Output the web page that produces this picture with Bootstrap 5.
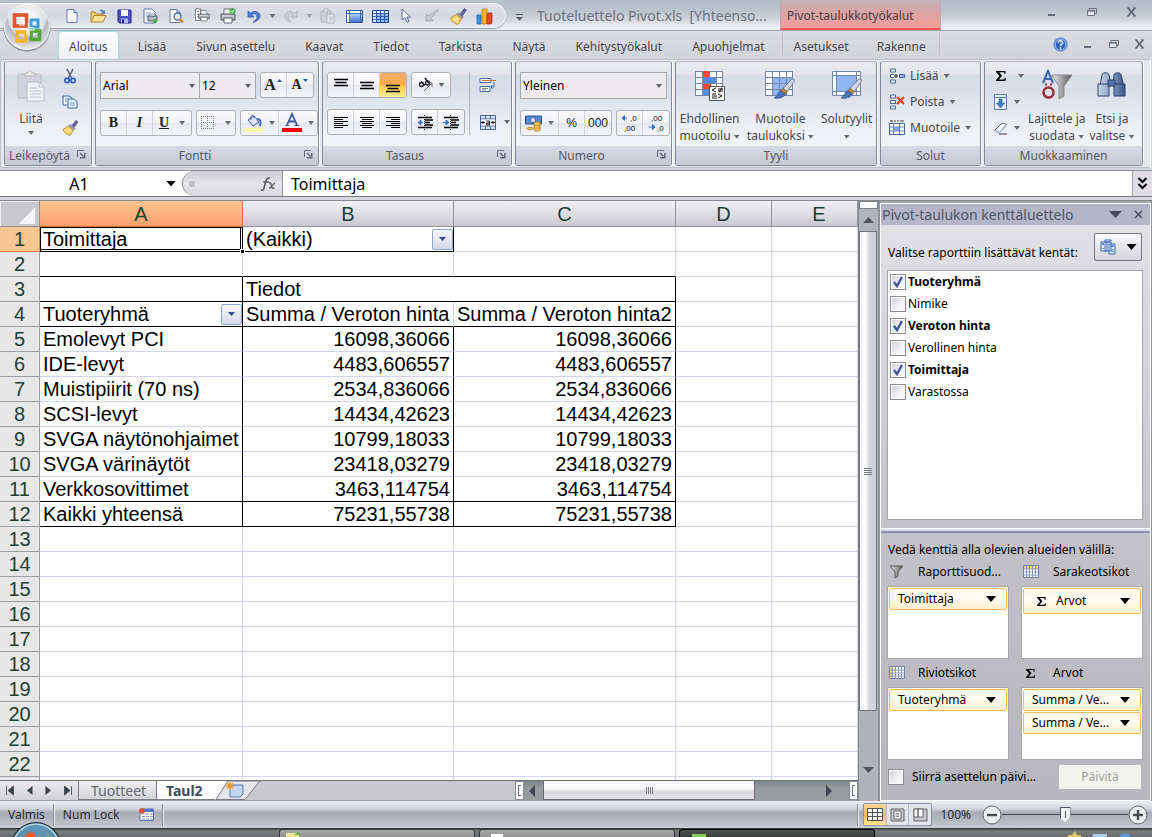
<!DOCTYPE html>
<html lang="fi">
<head>
<meta charset="utf-8">
<meta name="viewport" content="width=device-width, initial-scale=1">
<title>Tuoteluettelo Pivot.xls</title>
<link href="https://cdn.jsdelivr.net/npm/bootstrap@5.3.0/dist/css/bootstrap.min.css" rel="stylesheet">
<script src="https://cdn.jsdelivr.net/npm/bootstrap@5.3.0/dist/js/bootstrap.bundle.min.js"></script>
<style>
:root{--ui:"Noto Sans","Open Sans",sans-serif;--cell:"Liberation Sans",Arial,sans-serif;--ink:#46474f}
body{font-family:var(--ui);font-size:12px;line-height:16px;color:var(--ink);background:#d6d7de}
button,select,input{font:inherit;color:inherit}
button{background:none;border:0;padding:0}
svg{display:block;flex:none;overflow:visible}
/* title bar */
.titlebar{height:31px;background:linear-gradient(#b4bfc9,#b9c3cc 30%,#cdd1d8 60%,#eef0f4 92%);border-bottom:1px solid #a4a9b1}
.quickbar{height:25px;margin:3px 0 0;padding-left:59px;width:506px;background:linear-gradient(#e0e5ec,#d3d8e1 50%,#e6e9ef);border:1px solid #f2f4f7;border-left:0;border-radius:0 14px 14px 0;box-shadow:0 1px 1px #8d95a4}
.quickbar button,.tool26{width:26px;height:24px;display:flex;align-items:center;justify-content:center}
.tool26{height:26px}
.quickbar .thin{width:11px}
.doc-title{width:244px;padding-left:5px;font-size:14px;color:#6b7280;line-height:31px}
.ctx-title{width:161px;height:30px;line-height:31px;padding-left:6px;color:#454249;background:linear-gradient(#c0b4ba,#dba3a6 45%,#ee9e9c 85%);border-bottom:2px solid #f0584e;border-left:1px solid #b9aab4;border-right:1px solid #b9aab4}
.winctl button{width:40px;height:24px;display:flex;align-items:center;justify-content:center}
.orb{position:absolute;left:3px;top:3px;z-index:5}
.tabs{height:28px;padding-left:58px;gap:8px;background:linear-gradient(#dcdde3,#d3d4db)}
.tabs a{display:block;color:var(--ink);text-decoration:none;padding:7px 10px 3px;border:1px solid transparent;border-bottom:0;height:28px;white-space:nowrap}
.tabs a.on{background:linear-gradient(#fdfdff,#f0f2f8);border-color:#a9dcdf;border-radius:4px 4px 0 0;box-shadow:0 0 2px #8fd0d4}
.ctx-tabs{border-left:1px solid #c3c0c8;border-right:1px solid #c3c0c8;height:24px;gap:6px;padding-right:2px;margin-left:-2px}
.docctl{gap:10px;padding-right:6px;margin-top:-2px}
/* ribbon */
.ribbon{height:109px;padding:1px 0 5px 3px;gap:3px;background:#e8e9f0;border:1px solid #bdc0c8;border-right-color:#fff;border-radius:3px;margin:0 1px 0 0}
.rgroup{border:1px solid #85899a;border-top-color:#b8b6be;border-radius:3px;height:105px;background:linear-gradient(#ebeaf1 0,#e4e5ed 12%,#d6dde6 13%,#dbe0ea 30%,#eceef5 60%,#f0f3f6 80%);box-shadow:1px 0 0 #fbfbfd;flex:none}
.rfoot{height:19px;line-height:19px;text-align:center;background:linear-gradient(#d7d9e5,#c6c9d3);color:#565a67;position:relative;margin-top:auto}
.rfoot button{position:absolute;right:5px;top:4px}
.g1{width:88px}.g2{width:224px}.g3{width:190px}.g4{width:157px}.g5{width:202px}.g6{width:101px}.g7{width:159px}
.row-a{padding-top:10px}
.row-b{padding-top:11px}
.colpad{padding-top:1px}
.bset{border:1px solid #aeb1ba;border-radius:3px;height:26px;background:linear-gradient(#fbfbfc,#f2f2f6 48%,#e6e8ef 52%,#f5f6fa);display:flex}
.bset button{flex:1 1 auto;width:26px;height:24px;display:flex;align-items:center;justify-content:center;gap:6px;border-right:1px solid #d2d3da;color:#222}
.bset button:last-child{border-right:0}
.bset .wide{width:38px}
.bset .on{background:linear-gradient(#f5ad6c,#f9a94c 45%,#fdd069 60%,#fdeb93)}
.bset .slim{font-family:"Liberation Sans Narrow",var(--cell);font-size:12px}
.combo{height:27px;border:1px solid #a5abb5;border-radius:0;background:#eeebef url("data:image/svg+xml,%3Csvg xmlns='http://www.w3.org/2000/svg' width='6' height='4'%3E%3Cpath d='M0 0h6L3 4z' fill='%2360636b'/%3E%3C/svg%3E") no-repeat right 4px center;appearance:none;padding:0 2px;color:#000;outline:0}
.sizebox{width:56px;border-left:0}
.rserif{font-family:"Liberation Serif",serif;font-weight:bold;line-height:20px;font-size:14px}
.rserif.lg{font-size:16px}
.rserif.nar{gap:1px}
.big{line-height:17px;text-align:center;white-space:nowrap;display:flex;flex-direction:column;align-items:center;padding-top:8px}
.big svg.ic{margin-bottom:8px}
.ct{display:inline-block;flex:none;width:6px;height:4px;background:#666a73;clip-path:polygon(0 0,100% 0,50% 100%);vertical-align:middle}
.ct.blk{width:10px;height:6px;background:#000}
.rowbtn{display:flex;align-items:center;height:26px;gap:5px;white-space:nowrap}
.vsep{width:1px;background:#b4b6be;margin:0 4px}
.decs{font-family:var(--cell);font-size:8px;fill:#111}
/* formula bar */
.fbar{height:27px;margin-top:2px;border-top:1px solid #8c8f94;border-bottom:1px solid #77797d;background:#fff;color:#000;font-size:16px}
.namebox{width:182px;position:relative}
.namebox input{width:158px;text-align:center;border:0;height:25px;outline:0;background:none}
.fxpart{width:101px;border:1px solid #8c8f94;border-width:0 1px 0 1px;border-radius:13px 0 0 13px;background:linear-gradient(#cdccd2,#e6e5e9 50%,#d8d7dc)}
.fbar .entry{border:0;outline:0;padding:0 8px;min-width:0;height:25px}
.xpand{width:20px;border-left:1px solid #a2a4a8;background:#e0dee4}
.work{border-top:1px solid #85888c;margin-top:3px;min-height:0}
/* sheet */
.sheet{background:#fff;overflow:hidden;min-height:0;position:relative}
.sheet table{table-layout:fixed;border-collapse:separate;border-spacing:0;width:100%;font-family:var(--cell);font-size:20px;line-height:22px;color:#000}
.sheet td,.sheet thead th,.sheet tbody th{padding:0 3px;height:25px;border:0 solid #d3d3ec;border-width:0 1px 1px 0;white-space:nowrap;overflow:hidden}
.sheet thead th{height:26px;font-weight:400;text-align:center;color:#1f3f35;background:linear-gradient(#f2f0f4,#dbdae0 60%,#c9c9cf);border-color:#919399;line-height:24px}
.sheet tbody th{font-weight:400;text-align:center;padding:0;color:#1f3f35;background:#e7e7e8;border-color:#9b9da0}
.sheet thead th.sel{background:linear-gradient(#fdc692,#fd9f6a);border-color:#d97440}
.sheet tbody th.sel{background:#f6c690;border-color:#dd8a50}
.sheet thead th.corner{background:linear-gradient(135deg,transparent 0 50%,#f6f6f8 50%) no-repeat 19px 7px/16px 16px,#c8c7cb;box-shadow:inset 1px 1px #eee}
.sheet thead th:last-child{padding-left:12px}
.sheet .bb{border-bottom-color:#000}.sheet .br{border-right-color:#000}
.sheet .num{text-align:right;padding-right:3px}
.cur{box-shadow:inset 1px 1px #000,inset -1px -1px #fff,inset -2px -2px #000}
.sheet .grip{position:absolute;right:-3px;bottom:-3px;width:5px;height:5px;background:#000;border:1px solid #fff;z-index:2}
.cellbox{display:flex;justify-content:space-between;align-items:center}
.dd{width:21px;height:21px;border:1px solid #90a4cd;border-radius:2px;background:linear-gradient(#f6f7fc,#d6d9e8);display:flex;align-items:center;justify-content:center;margin-right:-3px}
.dd i{width:7px;height:4px;background:#2f4a8f;clip-path:polygon(0 0,100% 0,50% 100%)}
/* sheet tabs and scroll bars */
.sheetbar{height:21px;flex:none;background:#c9c9cd;border-top:1px solid #6e7278;border-bottom:1px solid #9da0a6;font-size:14px;line-height:19px}
.sheetnav{width:78px;background:linear-gradient(#eceaee,#d2d1d6)}
.stab{height:19px;background:linear-gradient(#f0eef1,#d5d4d9);border:1px solid #7a7d84;border-width:0 1px 1px;padding:0 10px 0 12px;width:79px;color:#65697a}
.stab.on{background:#fff;font-weight:bold;color:#434a5a;width:58px;padding:0 0 0 9px;border-width:0 0 1px}
.hsb{width:325px;background:linear-gradient(#7f8487,#979c9f 40%)}
.hthumb{flex:0 0 212px;background:linear-gradient(#f5f4f6,#fcfbfc 40%,#d7d6db 60%,#e5e4e9);border:1px solid #6b6e74;border-top:0}
.splitter{width:9px;flex:none;background:#fff;border:1px solid #8a8d96}
.splitter:before{content:"";display:block;width:3px;height:11px;margin:3px 0 0 2px;border:1px solid #68709a;border-right:0}
.vsb{width:20px;flex:none;background:#b1b2bc;border-left:1px solid #85888f}
.vsplit{height:8px;background:#fff;border:1px solid #7d8088}
.vthumb{background:linear-gradient(90deg,#f4f4f7,#fcfcfe 35%,#d4d5dc 60%,#cfd0d8);border:1px solid #71747d;margin-right:1px;flex:0 1 480px}
.grid-lines{display:flex;flex-direction:column;gap:1px}
.grid-lines i{width:8px;height:1px;background:#7c7e86}
.grid-lines.v{flex-direction:row}.grid-lines.v i{width:1px;height:7px}
/* field list pane */
.fpane{width:274px;flex:none;color:#000;border:1px solid #8f9299;border-width:0 1px 0 2px;padding-top:2px;background:#a5a8ae}
.fbody{border:1px solid #fff;background:linear-gradient(#e4e3e9,#c3c2c8 55%,#b7b6bd);min-height:0}
.fhead{height:21px;background:#b4b5c9;color:#4f5668;font-size:14px;padding:0 7px 0 1px;line-height:20px}
.chooser{width:48px;height:28px;border:1px solid #74777d;border-radius:2px;background:linear-gradient(#f9f9fb,#d3d3da);display:flex;align-items:center;justify-content:center;gap:11px}
.fields{background:#fff;border:1px solid #a3a4a9;margin:9px 7px 0 6px}
.fields label{height:22px;display:flex;align-items:center;gap:2px;padding-left:2px}
.tick{appearance:none;width:16px;height:16px;margin:0;border:1px solid #8b8d91;background:linear-gradient(135deg,#cfd0d5,#f8f8fa 70%);box-shadow:inset 0 0 0 1px #fff}
.tick:checked{background:url("data:image/svg+xml,%3Csvg xmlns='http://www.w3.org/2000/svg' width='14' height='14'%3E%3Cpath d='M3 7l3 4 5-9' fill='none' stroke='%233f56a0' stroke-width='2.4'/%3E%3C/svg%3E") center,linear-gradient(135deg,#cfd0d5,#f8f8fa 70%)}
.divider{height:5px;flex:none;margin-top:8px;border-top:1px solid #fff;border-bottom:2px solid #8c8cb4;background:#dcdce6}
.hint{padding:9px 0 0 7px}
.zones{display:grid;grid-template-columns:1fr 1fr;column-gap:12px;margin:0 7px 0 6px}
.zhead{height:28px;display:flex;align-items:center}
.zhead svg{margin:0 13px 0 2px}
.zbox{height:73px;background:#fff;border:1px solid #a8a9ad;padding:1px}
.pill{width:100%;height:22px;border:1px solid #fbbb62;border-radius:2px;background:linear-gradient(#fff8e9,#fffdf6 40%,#ffefcc);display:flex;align-items:center;padding:0 10px 0 8px;margin-bottom:1px;color:#000}
.pill .ct{margin-left:auto}
.pill.tall{height:26px;padding-left:12px;gap:9px}
.lastrow{margin:4px 8px 10px 7px}
.upd{width:84px;height:26px;border:1px solid #bdbcb8;border-radius:2px;background:#f2f2f1;color:#a09f99}
/* status bar and task bar */
.status{height:27px;flex:none;background:linear-gradient(#eceef4,#d4d6de 28%,#a9adb9 42%,#b4b8c1 70%,#c8cbd0);color:#2a2d35}
.stsep{width:2px;height:22px;border-left:1px solid #8f9199;border-right:1px solid #e9eaee}
.zoompct{padding:0 11px 0 8px}
.views{border:1px solid #8b91a0;border-radius:2px;height:23px;background:#e4e5ea}
.views button{width:22px;height:21px;display:flex;align-items:center;justify-content:center;border-right:1px solid #b9bbc3}
.views .on{width:23px;background:linear-gradient(#fbd3a2,#fbba4c 50%,#fdeb93)}
.zoomer{appearance:none;width:126px;height:20px;margin:0;background:linear-gradient(#45484f,#45484f) no-repeat center/100% 1px}
.zoomer::-webkit-slider-thumb{appearance:none;width:11px;height:16px;clip-path:polygon(0 0,100% 0,100% 65%,50% 100%,0 65%);border:0;background:linear-gradient(#5a5e66,#5a5e66) no-repeat center/1px 7px,#f1f2f5;box-shadow:inset 0 0 0 1px #4f535b}
.taskbar{height:9px;flex:none;background:linear-gradient(#4e5052,#7a7b7c 30%,#6a6b6c);border-top:1px solid #3a3b3d;position:relative;gap:4px;padding-left:279px}
.startorb{position:absolute;left:10px;top:-8px}
.tbtn{flex:0 1 196px;height:12px;border:1px solid #33363a;border-radius:3px;background:linear-gradient(#a9a8a8,#8b8b8b);padding-left:6px}
.tbtn.on{background:linear-gradient(#4d5150,#303433);border-color:#000}
.tray{gap:10px;padding:2px 20px 0 0}
</style>
</head>
<body class="vh-100 overflow-hidden d-flex flex-column position-relative">

<svg width="0" height="0" class="position-absolute" aria-hidden="true">
 <defs>
  <linearGradient id="blu" x2="0" y2="1"><stop stop-color="#b9d4f8"/><stop offset="1" stop-color="#4678d0"/></linearGradient>
  <linearGradient id="stl" x2="1" y2="0"><stop stop-color="#c9d6e6"/><stop offset=".5" stop-color="#7f9cc4"/><stop offset="1" stop-color="#3b5687"/></linearGradient>
  <linearGradient id="gry" x2="1" y2="0"><stop stop-color="#eee"/><stop offset="1" stop-color="#555"/></linearGradient>
  <radialGradient id="orbg" cx=".5" cy=".3" r=".75"><stop stop-color="#fff"/><stop offset=".55" stop-color="#dedfe4"/><stop offset=".6" stop-color="#b5b7bf"/><stop offset="1" stop-color="#f6f6f8"/></radialGradient>
  <symbol id="sheetpg" viewBox="0 0 16 16"><path d="M3 1.500h7l3 3v10H3z" fill="#fff" stroke="#5f78a6"/><path d="M10 1.500v3h3" fill="#cfdcf0" stroke="#5f78a6"/></symbol>
  <symbol id="brush" viewBox="0 0 16 16"><path d="M9.500 5.500l4-5 2 1.500-4 5.500z" fill="#6b5ea8" stroke="#473d80" stroke-width=".6"/><path d="M7.500 4.500l5 4-1.500 1.700L6 6.500z" fill="#9aa0b0" stroke="#555b70" stroke-width=".5"/><path d="M6 6l5 4.200L7.500 15.500C4 14.500 1 12 .5 9.500z" fill="#f6d66a" stroke="#a8762a" stroke-width=".7"/><path d="M3 10l4 3M5 8.500l3.500 3" stroke="#fff3b8" stroke-width="1"/></symbol>
  <symbol id="sigma" viewBox="0 0 12 12"><path d="M1 1h9.500v3H9.500C9.500 2.500 9 2.200 8 2.200H4.200L7 5.700 3.800 9.500h4.400c1.200 0 1.500-.5 1.800-1.700h1L10.400 11H1v-1l3.500-4L1 2z" fill="#000"/></symbol>
  <symbol id="grid" viewBox="0 0 30 26"><rect x=".5" y=".5" width="27" height="24" fill="#fff" stroke="#7585a6"/><path d="M7.500 0v25M14.500 0v25M21.500 0v25M0 6.500h28M0 12.500h28M0 18.500h28" stroke="#7585a6"/></symbol>
  <symbol id="paint" viewBox="0 0 20 20"><path d="M16.500 1c2.500-1.500 3.500 .5 2.500 2.500L12.500 12.500l-4-3z" fill="#d3d6de" stroke="#5d6a88" stroke-width=".8"/><path d="M8.500 9.500l4 3-1.500 2.300-4.500-3.300z" fill="#c98b3b" stroke="#7d4c12" stroke-width=".6"/><path d="M6.500 11.500l4.500 3.300C9 18.500 4 19.500 0 18.500c3-1 3.500-6 6.500-7z" fill="#4a72b5" stroke="#30508c" stroke-width=".6"/></symbol>
  <symbol id="dlg" viewBox="0 0 9 9"><path d="M.5 7V.5H7" fill="none" stroke="#666a78"/><path d="M3 3l3.500 3.500" stroke="#666a78" stroke-width="1.200"/><path d="M8.500 3v5.500H3V7h4V3z" fill="#666a78"/></symbol>
  <symbol id="min" viewBox="0 0 12 10"><path d="M2 8h7" stroke="#596070" stroke-width="1.800"/></symbol>
  <symbol id="res" viewBox="0 0 12 10"><path d="M3 3V1.500h7.500v5H9" fill="none" stroke="#6b7280"/><path d="M1.500 3.500h7v5h-7z" fill="#e3e6ec" stroke="#6b7280"/><path d="M1 3.800h8" stroke="#6b7280" stroke-width="1.600"/></symbol>
  <symbol id="cls" viewBox="0 0 12 10"><path d="M2 1l7 8M9 1L2 9" stroke="#5f6675" stroke-width="1.800"/><path d="M1 1h3M7 1h3M1 9h3M7 9h3" stroke="#5f6675"/></symbol>
  <symbol id="rows3" viewBox="0 0 16 16"><path d="M1.500 1h5v3h-5zM1.500 6.500h5v3h-5zM1.500 12h5v3h-5z" fill="#fff" stroke="#44649c"/></symbol>
  <symbol id="prn" viewBox="0 0 18 18"><path d="M5 7V2h7l1 1v4" fill="#fff" stroke="#667"/><path d="M2 7h14v6H2z" fill="#a9adb8" stroke="#555a66"/><path d="M5 11h8v5H5z" fill="#fff" stroke="#667"/><path d="M3 9h12" stroke="#e8eaf0"/></symbol>
 </defs>
</svg>

<header class="flex-shrink-0">
 <button class="orb" aria-label="Office-painike">
  <svg width="48" height="49" viewBox="0 0 48 49"><circle cx="24" cy="25" r="23.500" fill="#8d9098"/><circle cx="24" cy="24" r="22.500" fill="url(#orbg)" stroke="#fff"/>
   <g fill="none" stroke-width="3.600"><rect x="11.500" y="12" width="12" height="11" stroke="#e0562d"/><rect x="28" y="17" width="7" height="7" stroke="#3d9fe0" stroke-width="3"/><rect x="14" y="29" width="9" height="9" stroke="#f6b526"/><rect x="28" y="28" width="8.500" height="8.500" stroke="#55a839"/></g>
   <path d="M21 17v5h-5M25.500 20v4.500h5M18 26.500h6v5M26 33v-6h6" fill="none" stroke="#fff" stroke-width="1.200"/></svg>
 </button>
 <div class="titlebar d-flex">
  <div class="quickbar d-flex flex-shrink-0">
   <button aria-label="Uusi"><svg width="16" height="16"><use href="#sheetpg"/></svg></button>
   <button aria-label="Avaa"><svg width="17" height="16" viewBox="0 0 17 16"><path d="M1 14V4h4l1 2h7v2" fill="#f5d070" stroke="#b4832a"/><path d="M1 14l3-6.500h12L13 14z" fill="#fde394" stroke="#b4832a"/><path d="M9 3c2-2 4-1.500 5 0l1-1v4h-4l1.500-1C12 3.500 10.500 3 9 3z" fill="#4f84cc"/></svg></button>
   <button aria-label="Tallenna"><svg width="15" height="15" viewBox="0 0 15 15"><path d="M1 1h13v13H2.500L1 12.500z" fill="#4c4fc4" stroke="#25278a"/><path d="M4 1h7v6H4z" fill="#f4f6ff"/><path d="M4 9.500h7V14H4z" fill="#a9b4e8"/><path d="M5 10.500h2V14H5z" fill="#25278a"/></svg></button>
   <button aria-label="Pikatulostus"><svg width="16" height="16" viewBox="0 0 16 16"><path d="M2 1h8l3 3v11H2z" fill="#fff" stroke="#5f78a6"/><path d="M4 5h5M4 7h4M4 9h3" stroke="#7fa0d4"/><path d="M6 8h9v5H6z" fill="#b3bac8" stroke="#515a70"/><path d="M8 6h5v2H8z" fill="#fff" stroke="#515a70" stroke-width=".6"/><circle cx="13" cy="13" r="2.200" fill="#45b04a"/></svg></button>
   <button aria-label="Esikatselu"><svg width="16" height="16" viewBox="0 0 16 16"><use href="#sheetpg" width="16" height="16" x="-1"/><circle cx="9.500" cy="8.500" r="3.500" fill="#dcecff" stroke="#5b6f94" stroke-width="1.300"/><path d="M12 11l3 3.500" stroke="#d38a25" stroke-width="2.400"/></svg></button>
   <button aria-label="Sivun asetukset"><svg width="17" height="16" viewBox="0 0 18 18"><path d="M1 1h6v13H1z" fill="#fff" stroke="#667"/><path d="M3 4h2M3 7h2M3 10h2" stroke="#445"/><g transform="translate(3 1)scale(.85)"><use href="#prn" width="18" height="18"/></g></svg></button>
   <button aria-label="Tulosta"><svg width="18" height="18" viewBox="0 0 18 18"><use href="#prn" width="18" height="18"/><circle cx="13.500" cy="4" r="3" fill="#4fae4d"/><path d="M12 4l1.200 1.300L15 3" stroke="#fff" fill="none"/></svg></button>
   <button aria-label="Kumoa"><svg width="14" height="15" viewBox="0 0 14 15"><path d="M1 2v6h6L5 6c2-2.500 5.500-1 5 2-.3 2-2 4-4 5.500C10 12.500 13.500 9.500 13 6.500 12.400 2.500 7 1 3.200 4.200z" fill="#4a80d6" stroke="#2d55a5" stroke-width=".7"/></svg></button>
   <button class="thin" aria-label="Kumoa-luettelo"><i class="ct"></i></button>
   <button aria-label="Tee uudelleen"><svg width="14" height="15" viewBox="0 0 14 15"><path d="M13 2v6H7l2-2C7 3.500 3.500 5 4 8c.3 2 1 3.500 3 5C3 12 .5 9.500 1 6.500 1.600 2.500 7 1 10.800 4.200z" fill="#cdd0d9" stroke="#a6abb8" stroke-width=".7"/></svg></button>
   <button class="thin" aria-label="Toista-luettelo"><i class="ct opacity-50"></i></button>
   <button aria-label="Liitä" class="opacity-50"><svg width="16" height="16" viewBox="0 0 16 16"><path d="M1 3h10v11H1z" fill="#c6c6ce" stroke="#888"/><path d="M4 1h4v3H4z" fill="#eee" stroke="#888"/><path d="M7 6h7v9H7z" fill="#fff" stroke="#888"/><path d="M9 9h4M9 11h4M9 13h3" stroke="#999"/></svg></button>
   <button aria-label="Kiinnitä ruudut"><svg width="17" height="13" viewBox="0 0 17 13"><path d="M.5.500h16v12H.5z" fill="#fff" stroke="#2c54a4"/><path d="M4 3.500h12V12H4z" fill="url(#blu)"/><path d="M3.500 .5V12M0 3.500h17M14.500 0v13" stroke="#2c54a4" stroke-width=".8"/></svg></button>
   <button aria-label="Taulukko"><svg width="17" height="13" viewBox="0 0 17 13"><path d="M.5.500h16v12H.5z" fill="#dbe9ff" stroke="#1f4694"/><path d="M4.500 4H16v8H4.500z" fill="#8fb4f0"/><path d="M4.500 0v13M8.500 0v13M12.500 0v13M0 3.500h17M0 6.500h17M0 9.500h17" stroke="#1f4694" stroke-width=".8"/></svg></button>
   <button aria-label="Valitse objektit"><svg width="12" height="16" viewBox="0 0 12 16"><path d="M2 1v11l2.700-2.500L7 14.500l2-1L7 9h3.600z" fill="#fff" stroke="#5a6c92"/></svg></button>
   <button aria-label="Nuoli"><svg width="14" height="14" viewBox="0 0 14 14"><path d="M12.500.500l1 1L6 9l2 3H1V5l3 2z" fill="#c7cad3" stroke="#9ba0ad" stroke-width=".8"/></svg></button>
   <button aria-label="Muotoilusivellin"><svg width="17" height="17"><use href="#brush"/></svg></button>
   <button aria-label="Kaavio"><svg width="17" height="17" viewBox="0 0 17 17"><path d="M1 7h4v9H1z" fill="#3f8fe0" stroke="#1c5ba8" stroke-width=".7"/><path d="M6 2l1.500-1H11v14l-1 1H6z" fill="#fbb624" stroke="#a86a10" stroke-width=".7"/><path d="M11 6l1.500-1H16v10l-1 1h-4z" fill="#e4482c" stroke="#9e2512" stroke-width=".7"/></svg></button>
  </div>
  <button class="tool26 mt-1" aria-label="Mukauta"><svg width="7" height="7" viewBox="0 0 7 7"><path d="M0 .5h7" stroke="#555b66"/><path d="M0 3h7L3.500 6.500z" fill="#555b66"/></svg></button>
  <div class="doc-title flex-shrink-0 text-nowrap overflow-hidden">Tuoteluettelo Pivot.xls&nbsp; [Yhteenso...</div>
  <div class="ctx-title ms-1 flex-shrink-0 text-nowrap">Pivot-taulukkotyökalut</div>
  <div class="winctl d-flex ms-auto">
   <button aria-label="Pienennä"><svg width="12" height="10"><use href="#min"/></svg></button>
   <button aria-label="Palauta"><svg width="12" height="10"><use href="#res"/></svg></button>
   <button aria-label="Sulje"><svg width="12" height="10"><use href="#cls"/></svg></button>
  </div>
 </div>
 <nav class="tabs d-flex">
  <a class="on" href="#">Aloitus</a><a href="#">Lisää</a><a href="#">Sivun asettelu</a><a href="#">Kaavat</a><a href="#">Tiedot</a><a href="#">Tarkista</a><a href="#">Näytä</a><a href="#">Kehitystyökalut</a><a href="#">Apuohjelmat</a>
  <div class="ctx-tabs d-flex"><a href="#">Asetukset</a><a href="#">Rakenne</a></div>
  <div class="docctl d-flex ms-auto align-items-center">
   <button aria-label="Ohje"><svg width="15" height="15" viewBox="0 0 15 15"><circle cx="7.500" cy="7.500" r="7" fill="#2a62c8" stroke="#9db8e8"/><circle cx="7.500" cy="7.500" r="5.500" fill="none" stroke="#dfe9fb" stroke-width=".8"/><path d="M5.300 5.800c0-3 4.500-2.700 4.300 0C9.500 7.300 7.500 7.200 7.500 9M7.500 10.200v1.500" fill="none" stroke="#fff" stroke-width="1.500"/></svg></button>
   <button aria-label="Pienennä ikkuna" class="ps-1"><svg width="12" height="10"><use href="#min"/></svg></button>
   <button aria-label="Palauta ikkuna" class="px-1"><svg width="12" height="10"><use href="#res"/></svg></button>
   <button aria-label="Sulje ikkuna"><svg width="12" height="10"><use href="#cls"/></svg></button>
  </div>
 </nav>

 <div class="ribbon d-flex">
  <section class="rgroup g1 d-flex flex-column">
   <div class="d-flex">
    <button class="big flex-grow-1"><svg class="ic" width="30" height="32" viewBox="0 0 30 32" opacity=".6"><path d="M2 4h23v24H2z" fill="#cfcad8" stroke="#aaa6b6"/><path d="M9 6V3h3c0-3 4-3 4 0h3v3z" fill="#eee" stroke="#999"/><path d="M11 12h12l5 5v14H11z" fill="#fff" stroke="#a6a4b4"/><path d="M23 12v5h5M14 18h7M14 21h11M14 24h11M14 27h11" fill="none" stroke="#b0aec0"/></svg>Liitä<i class="ct mt-1"></i></button>
    <div class="d-flex flex-column me-1 pe-1 colpad">
     <button class="tool26" aria-label="Leikkaa"><svg width="12" height="15" viewBox="0 0 12 15"><path d="M3 0l4.500 9M9 0L4.500 9" stroke="#56617c" stroke-width="1.500"/><circle cx="3" cy="11.500" r="2.200" fill="none" stroke="#2c5fc0" stroke-width="1.700"/><circle cx="9" cy="11.500" r="2.200" fill="none" stroke="#2c5fc0" stroke-width="1.700"/></svg></button>
     <button class="tool26" aria-label="Kopioi"><svg width="16" height="14" viewBox="0 0 16 14"><path d="M1 1h6l3 2v7H1z" fill="#eaf2ff" stroke="#3d66b5"/><path d="M6 4h6l3 2.500V13H6z" fill="#eaf2ff" stroke="#3d66b5"/><path d="M3 4h3M3 6h2M8 8h5M8 10h5" stroke="#6f97dc"/></svg></button>
     <button class="tool26" aria-label="Muotoilusivellin"><svg width="17" height="16"><use href="#brush"/></svg></button>
    </div>
   </div>
   <div class="rfoot text-start ps-1 text-nowrap">Leikepöytä<button aria-label="Leikepöytä-ikkuna"><svg width="9" height="9"><use href="#dlg"/></svg></button></div>
  </section>

  <section class="rgroup g2 d-flex flex-column">
   <div class="d-flex ps-1 mx-0 pe-1 row-a">
    <select class="combo flex-grow-1" aria-label="Fontti"><option>Arial</option></select>
    <select class="combo sizebox" aria-label="Fonttikoko"><option>12</option></select>
    <div class="bset ms-1"><button class="rserif nar lg" aria-label="Suurenna fonttia">A<svg width="6" height="12" viewBox="0 0 6 12"><path d="M0 3h5L2.500 0z" fill="#2f57a8"/></svg></button><button class="rserif nar" aria-label="Pienennä fonttia">A<svg width="6" height="12" viewBox="0 0 6 12"><path d="M0 0h5L2.500 3z" fill="#2f57a8"/></svg></button></div>
   </div>
   <div class="d-flex mx-1 gap-1 row-b">
    <div class="bset"><button class="rserif" aria-label="Lihavointi">B</button><button class="rserif fst-italic" aria-label="Kursivointi">I</button><button class="wide rserif" aria-label="Alleviivaus"><u>U</u><i class="ct ms-1"></i></button></div>
    <div class="bset"><button class="wide" aria-label="Reunat"><svg width="14" height="14" viewBox="0 0 14 14"><path d="M.5 0v14M6.500 0v14M12.500 0v14M0 .5h14M0 6.500h14M0 12.500h14" stroke="#777b85" stroke-dasharray="1 1"/></svg><i class="ct ms-1"></i></button></div>
    <div class="bset flex-grow-1"><button class="wide" aria-label="Täyttöväri"><svg width="19" height="18" viewBox="0 0 19 18"><path d="M4 6l6-4 5 6-6 4z" fill="#dbe5f5" stroke="#3a5a96"/><path d="M7 6c-1-6 3-6 3-2" fill="none" stroke="#3a5a96"/><path d="M13 5c4 0 4 3 3 7" fill="none" stroke="#3c6fc8" stroke-width="2"/><path d="M0 14h19v4H0z" fill="#fbfaa9"/></svg><i class="ct"></i></button><button class="wide" aria-label="Fontin väri"><svg width="20" height="18" viewBox="0 0 20 18"><path d="M5 11L10 0l5 11M7 7.500h6" fill="none" stroke="#3a5a9e" stroke-width="1.800"/><path d="M3.500 11.500h3.500M12.500 11.500H17" stroke="#3a5a9e"/><path d="M0 14h20v4H0z" fill="#f80000"/></svg><i class="ct"></i></button></div>
   </div>
   <div class="rfoot pe-4">Fontti<button aria-label="Fontin asetukset"><svg width="9" height="9"><use href="#dlg"/></svg></button></div>
  </section>

  <section class="rgroup g3 d-flex flex-column">
   <div class="d-flex ms-1 row-a">
    <div>
     <div class="d-flex gap-1">
      <div class="bset"><button aria-label="Tasaa ylös"><svg width="14" height="14" viewBox="0 0 14 14"><path d="M0 1.500h14M1.500 4.500h11M0 7.500h14" stroke="#000" stroke-width="1.300"/></svg></button><button aria-label="Tasaa keskelle"><svg width="14" height="14" viewBox="0 0 14 14"><path d="M0 4.500h14M1.500 7.500h11M0 10.500h14" stroke="#000" stroke-width="1.300"/></svg></button><button class="on" aria-label="Tasaa alas"><svg width="14" height="14" viewBox="0 0 14 14"><path d="M0 7.500h14M1.500 10.500h11M0 13.500h14" stroke="#000" stroke-width="1.300"/></svg></button></div>
      <div class="bset"><button class="wide gap-1" aria-label="Suunta"><svg width="17" height="16" viewBox="0 0 17 16"><g fill="none" stroke="#222" stroke-width="1.400"><circle cx="3.500" cy="7.500" r="2"/><path d="M3 4.500l4 4M7 1l3.500 5"/><circle cx="9.500" cy="6" r="2"/></g><path d="M6 14l8-8M14 10V6h-4" fill="none" stroke="#666"/></svg><i class="ct"></i></button></div>
     </div>
     <div class="d-flex gap-1 row-b">
      <div class="bset"><button aria-label="Vasemmalle"><svg width="14" height="13" viewBox="0 0 14 13"><path d="M0 1.500h14M0 3.500h9M0 5.500h14M0 7.500h9M0 9.500h14M0 11.500h9" stroke="#000"/></svg></button><button aria-label="Keskelle"><svg width="14" height="13" viewBox="0 0 14 13"><path d="M0 1.500h14M2 3.500h10M0 5.500h14M2 7.500h10M0 9.500h14M2 11.500h10" stroke="#000"/></svg></button><button aria-label="Oikealle"><svg width="14" height="13" viewBox="0 0 14 13"><path d="M0 1.500h14M5 3.500h9M0 5.500h14M5 7.500h9M0 9.500h14M5 11.500h9" stroke="#000"/></svg></button></div>
      <div class="bset"><button aria-label="Pienennä sisennystä"><svg width="16" height="15" viewBox="0 0 16 15"><path d="M1 2.500h14M8 5h8M8 7.500h5M8 10h8M1 12.500h14" stroke="#000" stroke-width="1.500"/><path d="M7.500 0v15" stroke="#000" stroke-dasharray="1 1"/><path d="M6 7.500H2M4 5L1 7.500 4 10z" stroke="#3470d8" fill="#3470d8"/></svg></button><button aria-label="Suurenna sisennystä"><svg width="16" height="15" viewBox="0 0 16 15"><path d="M1 2.500h14M8 5h8M8 7.500h5M8 10h8M1 12.500h14" stroke="#000" stroke-width="1.500"/><path d="M7.500 0v15" stroke="#000" stroke-dasharray="1 1"/><path d="M0 7.500h4M3 5l3 2.500L3 10z" stroke="#3470d8" fill="#3470d8"/></svg></button></div>
     </div>
    </div>
    <div class="vsep"></div>
    <div class="d-flex flex-column justify-content-between">
     <button class="tool26" aria-label="Rivitä teksti"><svg width="17" height="16" viewBox="0 0 17 16"><path d="M1 1.500h11v4H1zM1 9.500h10v5H1z" fill="#fff" stroke="#4c6ba6"/><path d="M3 3.500h14" stroke="#c07830"/><path d="M3 11.500h6M3 13h4" stroke="#888"/><path d="M15 5v5h-3M13.500 8L12 10l1.500 2" fill="none" stroke="#3d66b5"/></svg></button>
     <button class="d-flex align-items-center tool26 gap-2 ps-3" aria-label="Yhdistä"><svg width="16" height="15" viewBox="0 0 16 15"><path d="M.5.500h15v14H.5z" fill="#dce6f6" stroke="#42619d"/><path d="M0 4h16M0 11h16M5.500 0v4M10.500 0v4M5.500 11v4M10.500 11v4" stroke="#42619d"/><path d="M1 4.500h14v6H1z" fill="#fff"/><path d="M1 7.500h4M11 7.500h4M3 6v3M13 6v3M6.500 6h3v4h-3V8h3" fill="none" stroke="#111"/></svg><i class="ct"></i></button>
    </div>
   </div>
   <div class="rfoot pe-4">Tasaus<button aria-label="Tasauksen asetukset"><svg width="9" height="9"><use href="#dlg"/></svg></button></div>
  </section>

  <section class="rgroup g4 d-flex flex-column">
   <div class="d-flex px-1 row-a"><select class="combo w-100" aria-label="Lukumuoto"><option>Yleinen</option></select></div>
   <div class="d-flex mx-1 gap-1 row-b">
    <div class="bset flex-grow-1"><button class="wide" aria-label="Valuutta"><svg width="17" height="17" viewBox="0 0 17 17"><path d="M.5 1h16v8H.5z" fill="#5a8ad2" stroke="#274e92"/><circle cx="8" cy="5" r="2.600" fill="#d5e3f8" stroke="#274e92" stroke-width=".7"/><path d="M2 13.500c0-1.500 6-1.500 6 0s-6 1.500-6 0zM9 8c0-1.500 6-1.500 6 0v7c0 1.500-6 1.500-6 0z" fill="#f8cf4a" stroke="#a5721a" stroke-width=".8"/><path d="M9 10.500h6M9 13h6" stroke="#a5721a" stroke-width=".7"/></svg><i class="ct"></i></button><button class="slim">%</button><button class="slim">000</button></div>
    <div class="bset"><button aria-label="Lisää desimaaleja"><svg width="17" height="18" viewBox="0 0 17 18"><path d="M6 4H2M3.500 1.500L1 4l2.500 2.500z" stroke="#3470d8" fill="#3470d8"/><text class="decs" x="9" y="7">,0</text><text class="decs" x="3" y="17">,00</text></svg></button><button aria-label="Vähennä desimaaleja"><svg width="17" height="18" viewBox="0 0 17 18"><path d="M1 13h5M4.500 10.500L7 13l-2.500 2.500z" stroke="#3470d8" fill="#3470d8"/><text class="decs" x="3" y="7">,00</text><text class="decs" x="9" y="17">,0</text></svg></button></div>
   </div>
   <div class="rfoot pe-4">Numero<button aria-label="Numeron asetukset"><svg width="9" height="9"><use href="#dlg"/></svg></button></div>
  </section>

  <section class="rgroup g5 d-flex flex-column">
   <div class="d-flex justify-content-around">
    <button class="big"><svg class="ic" width="32" height="32" viewBox="0 0 32 32"><use href="#grid" x="1" y="1" width="30" height="26"/><path d="M9 1h6v6H9z" fill="#f04a33"/><path d="M9 8h13v5H9z" fill="#4f8bf0"/><path d="M9 14h8v5H9z" fill="#f04a33"/><path d="M9 20h6v5H9z" fill="#4f8bf0"/><path d="M15.500 16.500h15v14h-15z" fill="#fff" stroke="#555"/><path d="M22 18l-4 2 4 2M18 24h4M24 19h5M24 21h5M28 17.500l-3 5M18 26h5M18 28h5M24 24l4 2-4 2" fill="none" stroke="#111"/></svg><span>Ehdollinen</span><span>muotoilu <i class="ct"></i></span></button>
    <button class="big"><svg class="ic" width="32" height="32" viewBox="0 0 32 32"><use href="#grid" x="1" y="1" width="30" height="26"/><path d="M9 8h6v5H9zM16 8h6v5h-6zM23 8h5v5h-5zM9 14h6v5H9zM16 14h6v5h-6zM9 20h6v5H9zM16 20h6v5h-6z" fill="#8fb8f5"/><use href="#paint" x="10" y="8" width="21" height="22"/></svg><span>Muotoile</span><span>taulukoksi <i class="ct"></i></span></button>
    <button class="big"><svg class="ic" width="32" height="32" viewBox="0 0 32 32"><path d="M1.500 1.500h28v24h-28z" fill="#fff" stroke="#7585a6"/><path d="M6 6h19v15H6z" fill="#8fb8f5"/><path d="M5.500 1v25M25.500 1v25M1 5.500h28M1 21.500h28" stroke="#7585a6"/><use href="#paint" x="10" y="8" width="21" height="22"/></svg><span>Solutyylit</span><span><i class="ct"></i></span></button>
   </div>
   <div class="rfoot">Tyyli</div>
  </section>

  <section class="rgroup g6 d-flex flex-column">
   <div class="d-flex flex-column ps-2 align-items-start colpad">
    <button class="rowbtn"><svg width="16" height="16" viewBox="0 0 16 16"><use href="#rows3" width="16" height="16"/><path d="M5 5h5v6H5z" fill="#e2e6ee"/><path d="M5 8h4M7 6v4" stroke="#222"/><path d="M10.500 6.500h5v3h-5z" fill="#8fb4ee" stroke="#44649c"/></svg>Lisää <i class="ct"></i></button>
    <button class="rowbtn"><svg width="16" height="16" viewBox="0 0 16 16"><use href="#rows3" width="16" height="16"/><path d="M8 3l7 7M15 3L8 10" stroke="#e6432c" stroke-width="2.200"/></svg>Poista <i class="ct"></i></button>
    <button class="rowbtn"><svg width="16" height="16" viewBox="0 0 16 16"><path d="M.5 3.500h15v11H.5z" fill="#fff" stroke="#44649c"/><path d="M4.500 3v12M10.500 3v12M0 7h16M0 11h16" stroke="#44649c" stroke-width=".8"/><path d="M5 7h5v4H5z" fill="#7aa8f0"/><path d="M2 0v2M2 1h12M14 0v2" stroke="#444" stroke-dasharray="2 1"/></svg>Muotoile <i class="ct"></i></button>
   </div>
   <div class="rfoot">Solut</div>
  </section>

  <section class="rgroup g7 d-flex flex-column">
   <div class="d-flex">
    <div class="ps-2 d-flex flex-column colpad">
     <button class="rowbtn" aria-label="Summa"><svg width="16" height="12" viewBox="0 0 16 12"><use href="#sigma" x="2" width="12" height="12"/></svg><i class="ct ms-1"></i></button>
     <button class="rowbtn" aria-label="Täyttö"><svg width="16" height="16" viewBox="0 0 16 16"><path d="M1.500.500h12v15h-12z" fill="#e9effa" stroke="#5b79b5"/><path d="M2 3.500h11" stroke="#5b79b5"/><path d="M6 5h3v4h2.500l-4 5-4-5H6z" fill="#3d7be0" stroke="#2354a8" stroke-width=".6"/></svg><i class="ct"></i></button>
     <button class="rowbtn" aria-label="Tyhjennä"><svg width="16" height="13" viewBox="0 0 16 13"><path d="M2 8l6-6c1-1 6-1 5 1l-6 7c-1 1-6 0-5-2z" fill="#fff" stroke="#4c5f86"/><path d="M2 8c1 1 4 1.500 5 1L13 3v2l-6 6c-1 1-6 0-5-3z" fill="#a9bfe4"/><path d="M6 12h8" stroke="#333"/></svg><i class="ct"></i></button>
    </div>
    <button class="big ms-1"><svg class="ic" width="32" height="32" viewBox="0 0 32 32"><path d="M11 5h20L23 16v10l-5 3V16z" fill="url(#gry)" stroke="#8a8a8a"/><path d="M2 13L7 1l5 12M4 9h6" fill="none" stroke="#3d66b0" stroke-width="2"/><circle cx="7.500" cy="22.500" r="5" fill="none" stroke="#98333d" stroke-width="2.600"/><path d="M4 14.500h2M9 14.500h2" stroke="#98333d" stroke-width="2"/></svg><span>Lajittele ja</span><span>suodata <i class="ct"></i></span></button>
    <button class="big ms-1"><svg class="ic" width="32" height="32" viewBox="0 0 32 32"><path d="M6 5c0-3 7-3 7 0l2 10v1H4zM18 5c0-3 7-3 7 0l3 11H17V15z" fill="url(#stl)" stroke="#2c4270"/><path d="M2 14h11v12H2zM18 14h11v12H18z" fill="url(#stl)" stroke="#2c4270"/><path d="M12 10h7v6h-7z" fill="#5573a6" stroke="#2c4270"/></svg><span>Etsi ja</span><span>valitse <i class="ct"></i></span></button>
   </div>
   <div class="rfoot">Muokkaaminen</div>
  </section>
 </div>

 <div class="fbar d-flex">
  <div class="namebox d-flex align-items-center flex-shrink-0"><input value="A1" aria-label="Nimiruutu"><button aria-label="Nimet" class="d-flex ms-1 ps-1"><i class="ct blk"></i></button></div>
  <div class="fxpart flex-shrink-0 d-flex align-items-center justify-content-between pe-1 ps-1"><svg width="10" height="10"><circle cx="5" cy="5" r="4" fill="#bdbec6" stroke="#eee"/></svg><button aria-label="Lisää funktio"><svg width="18" height="16" viewBox="0 0 18 16" fill="none" stroke="#5d5f65"><path d="M1 14c3 1 3-2 4-6s2-7 5-6M3.500 6H9" stroke-width="1.700"/><path d="M9 7c2-1 2 1 2.500 3s1 3 3 2M15 7c-2 0-3 5.500-6 5" stroke-width="1.400"/></svg></button></div>
  <input class="entry flex-grow-1" value="Toimittaja" aria-label="Kaavarivi">
  <button class="xpand d-flex align-items-center justify-content-center" aria-label="Laajenna kaavarivi"><svg width="11" height="13" viewBox="0 0 11 13"><path d="M1.500 1l4 4 4-4M1.500 7l4 4 4-4" fill="none" stroke="#000" stroke-width="2"/></svg></button>
 </div>
</header>

<main class="work d-flex flex-grow-1">
 <div class="d-flex flex-column flex-grow-1 overflow-hidden">
  <div class="sheet flex-grow-1">
   <table>
    <colgroup><col style="width:40px"><col style="width:203px"><col style="width:211px"><col style="width:222px"><col style="width:96px"><col></colgroup>
    <thead><tr><th class="corner"></th><th class="sel">A</th><th>B</th><th>C</th><th>D</th><th>E</th></tr></thead>
    <tbody>
     <tr><th class="sel">1</th><td class="cur bb br position-relative overflow-visible">Toimittaja<i class="grip"></i></td><td class="bb br"><div class="cellbox">(Kaikki)<button class="dd" aria-label="Suodata toimittaja"><i></i></button></div></td><td></td><td></td><td></td></tr>
     <tr><th>2</th><td class="bb"></td><td class="bb"></td><td class="bb"></td><td></td><td></td></tr>
     <tr><th>3</th><td class="bb br"></td><td colspan="2" class="bb br">Tiedot</td><td></td><td></td></tr>
     <tr><th>4</th><td class="bb br"><div class="cellbox">Tuoteryhmä<button class="dd" aria-label="Suodata tuoteryhmä"><i></i></button></div></td><td class="bb">Summa / Veroton hinta</td><td class="bb br">Summa / Veroton hinta2</td><td></td><td></td></tr>
     <tr><th>5</th><td class="br">Emolevyt PCI</td><td class="num br">16098,36066</td><td class="num br">16098,36066</td><td></td><td></td></tr>
     <tr><th>6</th><td class="br">IDE-levyt</td><td class="num br">4483,606557</td><td class="num br">4483,606557</td><td></td><td></td></tr>
     <tr><th>7</th><td class="br">Muistipiirit (70 ns)</td><td class="num br">2534,836066</td><td class="num br">2534,836066</td><td></td><td></td></tr>
     <tr><th>8</th><td class="br">SCSI-levyt</td><td class="num br">14434,42623</td><td class="num br">14434,42623</td><td></td><td></td></tr>
     <tr><th>9</th><td class="br">SVGA näytönohjaimet</td><td class="num br">10799,18033</td><td class="num br">10799,18033</td><td></td><td></td></tr>
     <tr><th>10</th><td class="br">SVGA värinäytöt</td><td class="num br">23418,03279</td><td class="num br">23418,03279</td><td></td><td></td></tr>
     <tr><th>11</th><td class="bb br">Verkkosovittimet</td><td class="num bb br">3463,114754</td><td class="num bb br">3463,114754</td><td></td><td></td></tr>
     <tr><th>12</th><td class="bb br">Kaikki yhteensä</td><td class="num bb br">75231,55738</td><td class="num bb br">75231,55738</td><td></td><td></td></tr>
     <tr><th>13</th><td></td><td></td><td></td><td></td><td></td></tr>
     <tr><th>14</th><td></td><td></td><td></td><td></td><td></td></tr>
     <tr><th>15</th><td></td><td></td><td></td><td></td><td></td></tr>
     <tr><th>16</th><td></td><td></td><td></td><td></td><td></td></tr>
     <tr><th>17</th><td></td><td></td><td></td><td></td><td></td></tr>
     <tr><th>18</th><td></td><td></td><td></td><td></td><td></td></tr>
     <tr><th>19</th><td></td><td></td><td></td><td></td><td></td></tr>
     <tr><th>20</th><td></td><td></td><td></td><td></td><td></td></tr>
     <tr><th>21</th><td></td><td></td><td></td><td></td><td></td></tr>
     <tr><th>22</th><td></td><td></td><td></td><td></td><td></td></tr>
     <tr><th></th><td></td><td></td><td></td><td></td><td></td></tr>
    </tbody>
   </table>
  </div>
  <div class="sheetbar d-flex">
   <div class="sheetnav d-flex align-items-center justify-content-around">
    <button aria-label="Ensimmäinen"><svg width="8" height="9"><path d="M.5 0v9M7.500 0v9L2 4.500z" fill="#3d414a" stroke="#3d414a" stroke-width=".8"/></svg></button>
    <button aria-label="Edellinen"><svg width="6" height="9"><path d="M5.500 0v9L0 4.500z" fill="#3d414a"/></svg></button>
    <button aria-label="Seuraava"><svg width="6" height="9"><path d="M.5 0v9L6 4.500z" fill="#3d414a"/></svg></button>
    <button aria-label="Viimeinen"><svg width="8" height="9"><path d="M7.500 0v9M.5 0v9L6 4.500z" fill="#3d414a" stroke="#3d414a" stroke-width=".8"/></svg></button>
   </div>
   <button class="stab">Tuotteet</button><button class="stab on text-start">Taul2</button>
   <button aria-label="Lisää taulukko"><svg width="48" height="19" viewBox="0 0 48 19"><path d="M0 0h12L1 18.500H0z" fill="#fff"/><path d="M13 0h32L30 18.500H1z" fill="#e7e6ea" stroke="#7a7d84"/><path d="M17 4h11v9l-3 3H15V9" fill="#c3d6f4" stroke="#5474ae"/><path d="M15 1v8M11 5h8M12 2l6 6M18 2l-6 6" stroke="#e79a2c" stroke-width="1.300"/></svg></button>
   <div class="splitter ms-auto"></div>
   <div class="hsb d-flex justify-content-between">
    <button class="px-1" aria-label="Vieritä vasemmalle"><svg width="7" height="12"><path d="M7 0v12L1 6z" fill="#3c4550"/></svg></button>
    <div class="hthumb ms-1 me-auto d-flex align-items-center justify-content-center"><span class="grid-lines v"><i></i><i></i><i></i><i></i></span></div>
    <button class="px-3" aria-label="Vieritä oikealle"><svg width="7" height="12"><path d="M0 0v12l6-6z" fill="#3c4550"/></svg></button>
   </div>
   <div class="splitter"></div>
  </div>
 </div>
 <div class="vsb d-flex flex-column align-items-stretch">
  <div class="vsplit"></div>
  <button class="py-2 px-1" aria-label="Vieritä ylös"><svg width="11" height="6"><path d="M0 6h11L5.500 0z" fill="#53575f"/></svg></button>
  <div class="vthumb d-flex align-items-center justify-content-center"><span class="grid-lines"><i></i><i></i><i></i><i></i></span></div>
  <button class="mt-auto px-1 mb-4 pb-1" aria-label="Vieritä alas"><svg width="11" height="6"><path d="M0 0h11L5.500 6z" fill="#53575f"/></svg></button>
 </div>
 <aside class="fpane d-flex flex-column">
  <div class="fbody d-flex flex-column flex-grow-1">
   <div class="fhead d-flex align-items-center"><span>Pivot-taulukon kenttäluettelo</span><svg class="ms-auto" width="13" height="7"><path d="M0 0h13L6.500 7z" fill="#454b5c"/></svg><button class="ms-2 ps-1" aria-label="Sulje luettelo"><svg width="9" height="9"><path d="M1 1l7 7M8 1L1 8" stroke="#454b5c" stroke-width="1.500"/></svg></button></div>
   <div class="d-flex align-items-end justify-content-between hint pt-2 pe-2"><span>Valitse raporttiin lisättävät kentät:</span><button class="chooser" aria-label="Asettelu"><svg width="16" height="16" viewBox="0 0 16 16"><path d="M1 3h6v9H1zM5 1h6v11H5zM9 5h6v10H9z" fill="#eaf2ff" stroke="#3d66b5"/><path d="M6 2h4v2H6zM10 6h4v2h-4zM2 4h2v2H2z" fill="#5c8fe4"/><path d="M6.500 7.500H9M11 10.500h3M11 12.500h3M2 9.500h2" stroke="#6f97dc"/></svg><i class="ct blk"></i></button></div>
   <div class="fields flex-grow-1">
    <label class="fw-bold"><input class="tick" type="checkbox" checked>Tuoteryhmä</label>
    <label><input class="tick" type="checkbox">Nimike</label>
    <label class="fw-bold"><input class="tick" type="checkbox" checked>Veroton hinta</label>
    <label><input class="tick" type="checkbox">Verollinen hinta</label>
    <label class="fw-bold"><input class="tick" type="checkbox" checked>Toimittaja</label>
    <label><input class="tick" type="checkbox">Varastossa</label>
   </div>
   <div class="divider"></div>
   <div class="hint text-nowrap">Vedä kenttiä alla olevien alueiden välillä:</div>
   <div class="zones">
    <div>
     <div class="zhead"><svg width="16" height="14" viewBox="0 0 16 14"><path d="M1 1h13L9 7v4l-3 2V7z" fill="url(#gry)" stroke="#555"/></svg>Raporttisuod...</div>
     <div class="zbox"><button class="pill">Toimittaja<i class="ct blk"></i></button></div>
    </div>
    <div>
     <div class="zhead"><svg width="17" height="14" viewBox="0 0 17 14"><path d="M.5.500h15v12H.5z" fill="#fff" stroke="#6b7fa8"/><path d="M1 1h14v3H1z" fill="#f8d67c"/><path d="M3.500 0v13M6.500 0v13M9.500 0v13M12.500 0v13M0 4h16M0 7h16M0 10h16" stroke="#7f92b8" stroke-width=".9"/></svg>Sarakeotsikot</div>
     <div class="zbox"><button class="pill tall"><svg width="11" height="11"><use href="#sigma"/></svg>Arvot<i class="ct blk"></i></button></div>
    </div>
    <div>
     <div class="zhead"><svg width="16" height="14" viewBox="0 0 16 14"><path d="M.5.500h15v12H.5z" fill="#fff" stroke="#6b7fa8"/><path d="M1 1h3v11H1z" fill="#f8d67c"/><path d="M3.500 0v13M6.500 0v13M9.500 0v13M12.500 0v13M0 4h16M0 7h16M0 10h16" stroke="#7f92b8" stroke-width=".9"/></svg>Riviotsikot</div>
     <div class="zbox"><button class="pill">Tuoteryhmä<i class="ct blk"></i></button></div>
    </div>
    <div>
     <div class="zhead"><svg width="17" height="11" viewBox="0 0 17 11"><use href="#sigma" x="2" width="11" height="11"/></svg>Arvot</div>
     <div class="zbox"><button class="pill">Summa / Ve...<i class="ct blk"></i></button><button class="pill">Summa / Ve...<i class="ct blk"></i></button></div>
    </div>
   </div>
   <div class="lastrow d-flex align-items-center justify-content-between"><label class="d-flex align-items-center gap-2 text-nowrap"><input class="tick" type="checkbox">Siirrä asettelun päivi...</label><button class="upd" disabled>Päivitä</button></div>
  </div>
 </aside>
</main>

<footer class="status d-flex align-items-center">
 <span class="ps-2 pe-2">Valmis</span><i class="stsep"></i><span class="ps-2 pe-3">Num Lock</span>
 <button aria-label="Makro" class="ps-1 pe-2"><svg width="15" height="13" viewBox="0 0 15 13"><path d="M1 1h13.500v11.500H1z" fill="#fff" stroke="#5a6fa8"/><path d="M1 1h13v3H1z" fill="#4b75cf"/><path d="M3 6h3M7 6h3M11 6h3M3 8.500h3M7 8.500h3M11 8.500h3M3 11h3M7 11h3M11 11h3" stroke="#7f92c4" stroke-width="1.200"/><circle cx="3" cy="3" r="2.800" fill="#e05030"/></svg></button><i class="stsep"></i>
 <i class="stsep ms-auto me-1"></i>
 <div class="views d-flex">
  <button class="on" aria-label="Normaali"><svg width="16" height="13" viewBox="0 0 16 13"><path d="M.5.500h15v12H.5zM5.500 0v13M10.500 0v13M0 4.500h16M0 8.500h16" fill="#fff" stroke="#555"/></svg></button>
  <button aria-label="Sivun asettelu"><svg width="15" height="14" viewBox="0 0 15 14"><path d="M1 1h13v12H1z" fill="#c6c7cd" stroke="#666"/><path d="M4 3h7v8H4z" fill="#fff" stroke="#666"/><path d="M5.500 5.500h4M5.500 7h4M5.500 8.500h4" stroke="#777" stroke-width=".8"/></svg></button>
  <button class="border-0" aria-label="Sivunvaihdot"><svg width="15" height="14" viewBox="0 0 15 14"><path d="M1 1h13v12H1z" fill="#c6c7cd" stroke="#666"/><path d="M1 1h4v8H1zM5 1h5v8H5z" fill="#fff" stroke="#666"/></svg></button>
 </div>
 <span class="zoompct">100%</span>
 <button aria-label="Loitonna"><svg width="20" height="20"><circle cx="10" cy="10" r="9" fill="#eceef2" stroke="#60646d"/><path d="M5 10h10" stroke="#474b54" stroke-width="2.400"/></svg></button>
 <input class="zoomer" type="range" min="0" max="100" value="50" aria-label="Zoomaus">
 <button aria-label="Lähennä" class="me-1"><svg width="20" height="20"><circle cx="10" cy="10" r="9" fill="#eceef2" stroke="#60646d"/><path d="M5 10h10M10 5v10" stroke="#474b54" stroke-width="2.400"/></svg></button>
</footer>
<div class="taskbar d-flex">
 <button class="startorb" aria-label="Käynnistä"><svg width="52" height="52"><circle cx="26" cy="26" r="25" fill="#17303f"/><circle cx="26" cy="26" r="23" fill="#5e93b4" stroke="#b9dcec" stroke-width="1.500"/><path d="M15 15c3-4 7-5 11-2v8H13z" fill="#e8592b"/><path d="M27 14c4 3 8 3 12 0l2 8H27z" fill="#7cb542"/></svg></button>
 <div class="tbtn"><svg width="16" height="9"><path d="M0 3h13v6H0z" fill="#f0e6a0"/><path d="M8 5l4-3 3 3z" fill="#56b23c"/></svg></div><div class="tbtn"><svg width="14" height="9"><path d="M5 4h12v6H5z" fill="#fff"/></svg></div><div class="tbtn on"><svg width="16" height="9"><path d="M6 4h14v6H6z" fill="#83cf5e"/></svg></div>
 <div class="tray ms-auto d-flex"><svg width="14" height="8"><path d="M0 4h4l3-4 2 4h4v4H0z" fill="#d8c96a"/></svg><svg width="16" height="8"><path d="M1 3h14v5H0z" fill="#a9cdea"/></svg><svg width="14" height="8"><path d="M1 8c0-8 12-8 12 0z" fill="#5f97cf"/></svg></div>
</div>
</body>
</html>
